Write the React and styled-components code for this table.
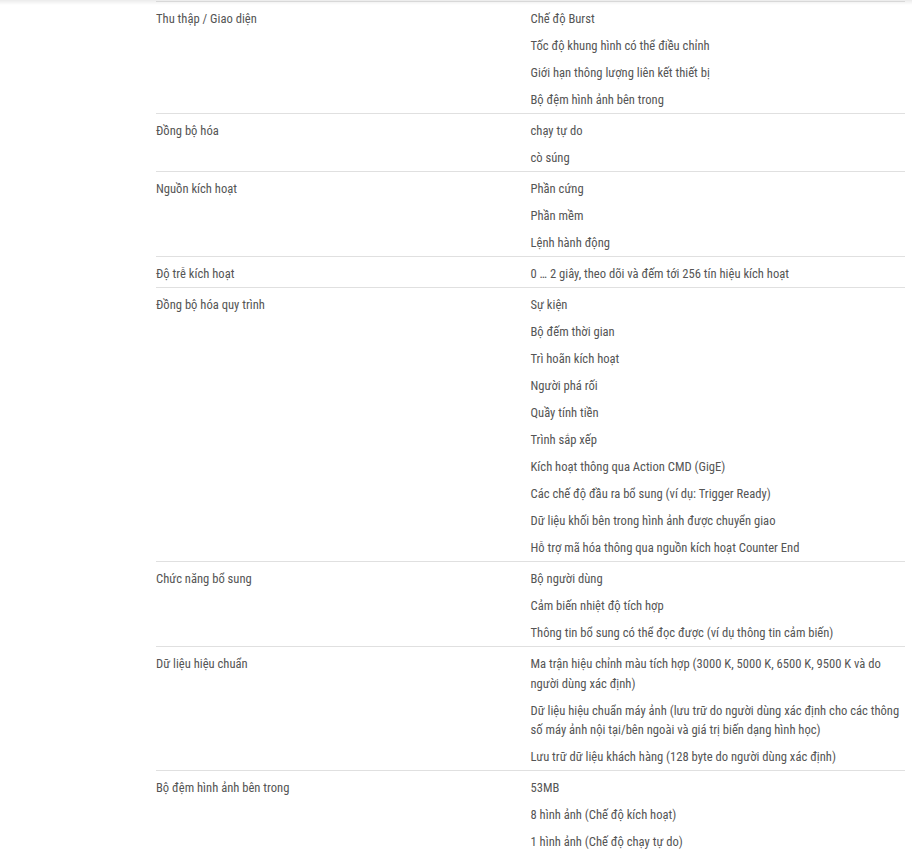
import React from "react";
import styled, { createGlobalStyle } from "styled-components";

const Global = createGlobalStyle`
  html, body { margin: 0; padding: 0; }
  body {
    background: #fff linear-gradient(#ebebeb, #fff 5px) no-repeat;
    background-size: 100% 6px;
    font-family: Roboto, "Noto Sans", sans-serif;
    font-stretch: 75%;
    color: #555;
  }
`;

const Page = styled.div`
  padding: 1px 7px 0 156px;
`;

const Table = styled.div`
  border-top: 1px solid #d8d8d8;
`;

const Row = styled.div`
  display: grid;
  grid-template-columns: 1fr 1fr;
  border-bottom: 1px solid #e0e0e0;
  padding: 7px 0 3.5px;

  &:last-child {
    border-bottom: none;
  }
`;

const Label = styled.div`
  font-size: 12.6px;
  line-height: 19.5px;
`;

const Values = styled.ul`
  list-style: none;
  margin: 0;
  padding: 0;
  display: flex;
  flex-direction: column;
  gap: 7.5px;
`;

const Value = styled.li`
  font-size: 12.6px;
  line-height: 19.5px;
`;

const rows = [
  ["Thu thập / Giao diện", ["Chế độ Burst", "Tốc độ khung hình có thể điều chỉnh", "Giới hạn thông lượng liên kết thiết bị", "Bộ đệm hình ảnh bên trong"]],
  ["Đồng bộ hóa", ["chạy tự do", "cò súng"]],
  ["Nguồn kích hoạt", ["Phần cứng", "Phần mềm", "Lệnh hành động"]],
  ["Độ trễ kích hoạt", ["0 … 2 giây, theo dõi và đếm tới 256 tín hiệu kích hoạt"]],
  ["Đồng bộ hóa quy trình", [
    "Sự kiện",
    "Bộ đếm thời gian",
    "Trì hoãn kích hoạt",
    "Người phá rối",
    "Quầy tính tiền",
    "Trình sắp xếp",
    "Kích hoạt thông qua Action CMD (GigE)",
    "Các chế độ đầu ra bổ sung (ví dụ: Trigger Ready)",
    "Dữ liệu khối bên trong hình ảnh được chuyển giao",
    "Hỗ trợ mã hóa thông qua nguồn kích hoạt Counter End",
  ]],
  ["Chức năng bổ sung", ["Bộ người dùng", "Cảm biến nhiệt độ tích hợp", "Thông tin bổ sung có thể đọc được (ví dụ thông tin cảm biến)"]],
  ["Dữ liệu hiệu chuẩn", [
    "Ma trận hiệu chỉnh màu tích hợp (3000 K, 5000 K, 6500 K, 9500 K và do người dùng xác định)",
    "Dữ liệu hiệu chuẩn máy ảnh (lưu trữ do người dùng xác định cho các thông số máy ảnh nội tại/bên ngoài và giá trị biến dạng hình học)",
    "Lưu trữ dữ liệu khách hàng (128 byte do người dùng xác định)",
  ]],
  ["Bộ đệm hình ảnh bên trong", ["53MB", "8 hình ảnh (Chế độ kích hoạt)", "1 hình ảnh (Chế độ chạy tự do)"]],
];

export default function App() {
  return (
    <>
      <Global />
      <Page>
        <Table>
          {rows.map(([label, values]) => (
            <Row key={label}>
              <Label>{label}</Label>
              <Values>
                {values.map((v) => (
                  <Value key={v}>{v}</Value>
                ))}
              </Values>
            </Row>
          ))}
        </Table>
      </Page>
    </>
  );
}
